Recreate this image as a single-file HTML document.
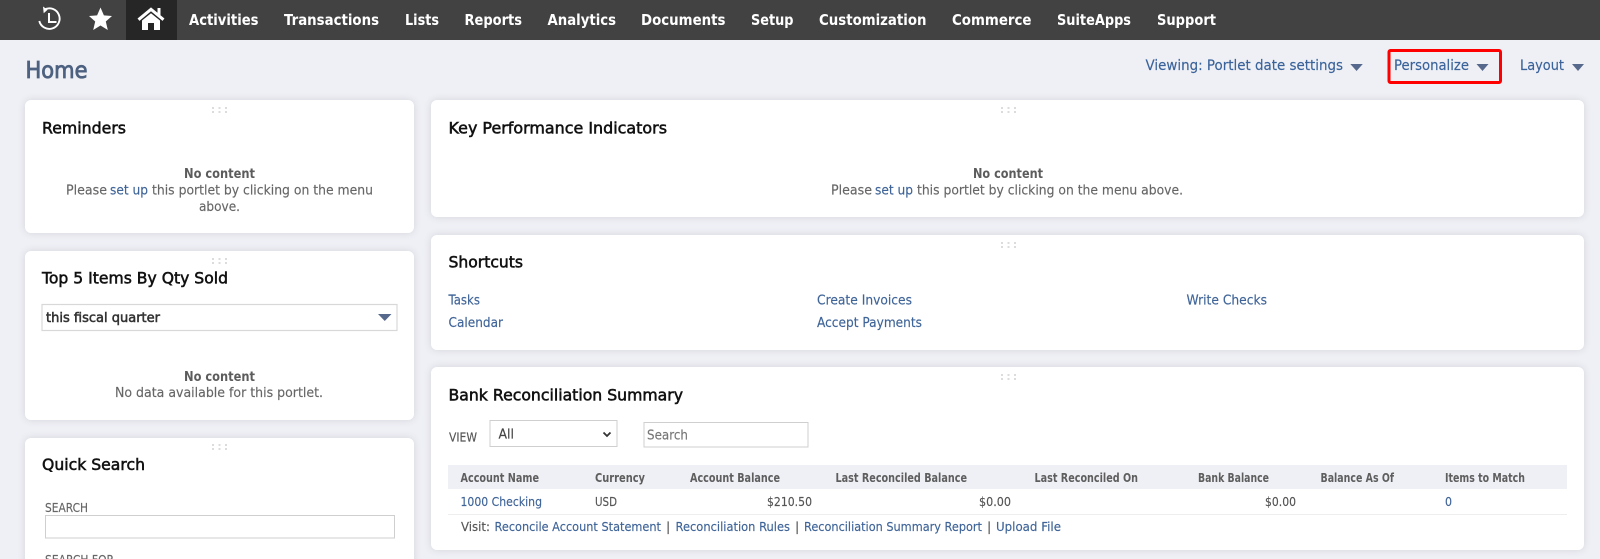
<!DOCTYPE html>
<html lang="en"><head><meta charset="utf-8"><title>Home</title>
<style>
html,body{margin:0;padding:0;width:1600px;height:559px;overflow:hidden;background:#eff0f5}
#w{position:relative;width:1600px;height:559px;overflow:hidden}
svg{position:absolute;left:0;top:0;display:block}
.card{position:absolute;background:#fff;border-radius:6px;box-shadow:0 0 8px rgba(60,70,90,.15)}
text{font-family:"DejaVu Sans","Liberation Sans",sans-serif;font-size:13px;fill:#666;stroke:#666;stroke-width:.15px}
.nav{font-weight:700;font-size:15px;fill:#fff;stroke:none}
.t{font-size:16px;fill:#111;stroke:#111;stroke-width:.55px}
.b{font-weight:700;fill:#5c5c5c;stroke:none}
.a{fill:#3f6498;stroke:#3f6498}
.h{font-size:12px;font-weight:700;fill:#5e5e5e;stroke:none}
.d{font-size:12.5px;fill:#555;stroke:#555}
.l{font-size:12.5px;fill:#3f6498;stroke:#3f6498}
.top{font-size:14px;fill:#3a639b;stroke:#3a639b}
.lab{font-size:12px;fill:#666}
</style></head><body>
<div id="w">
<div class="card" style="left:25px;top:100px;width:389px;height:133px"></div>
<div class="card" style="left:25px;top:251px;width:389px;height:169px"></div>
<div class="card" style="left:25px;top:437.500px;width:389px;height:140px"></div>
<div class="card" style="left:431px;top:100px;width:1153px;height:117px"></div>
<div class="card" style="left:431px;top:235px;width:1153px;height:115px"></div>
<div class="card" style="left:431px;top:367px;width:1153px;height:183px"></div>
<svg width="1600" height="559" viewBox="0 0 1600 559" xmlns="http://www.w3.org/2000/svg">
<rect width="1600" height="40" fill="#424242"/>
<rect x="126" width="51" height="40" fill="#262626"/>
<!-- recent -->
<path d="M44.500 9.500A10.300 10.300 0 1 1 39.300 21" fill="none" stroke="#fff" stroke-width="1.900"/>
<path d="M43 6.500l4.600 3.200-3.900 3.600z" fill="#fff"/>
<path d="M49 13v9h7.500" fill="none" stroke="#fff" stroke-width="2"/>
<!-- star -->
<path d="M100.500 7.500l3.400 7.900 8.100.6-6.200 5.500 2 8.500-7.300-4.500-7.300 4.500 2-8.500L89 16l8.100-.6z" fill="#fff"/>
<!-- home -->
<path d="M138.500 19.700L151 9.300l12.500 10.400" fill="none" stroke="#fff" stroke-width="3"/>
<path d="M157.500 8h3v7h-3z" fill="#fff"/>
<path d="M142 20.500L151 13.200l9 7.300V30h-6v-7h-6v7h-6z" fill="#fff"/>
<rect x="148" y="23" width="6" height="4" fill="#262626"/>

<text class="nav" x="189" y="25" textLength="69.500" lengthAdjust="spacingAndGlyphs">Activities</text>
<text class="nav" x="284" y="25" textLength="95" lengthAdjust="spacingAndGlyphs">Transactions</text>
<text class="nav" x="405" y="25" textLength="34" lengthAdjust="spacingAndGlyphs">Lists</text>
<text class="nav" x="464.500" y="25" textLength="57.500" lengthAdjust="spacingAndGlyphs">Reports</text>
<text class="nav" x="547.500" y="25" textLength="68.500" lengthAdjust="spacingAndGlyphs">Analytics</text>
<text class="nav" x="641" y="25" textLength="84.500" lengthAdjust="spacingAndGlyphs">Documents</text>
<text class="nav" x="751" y="25" textLength="42.500" lengthAdjust="spacingAndGlyphs">Setup</text>
<text class="nav" x="819" y="25" textLength="107.500" lengthAdjust="spacingAndGlyphs">Customization</text>
<text class="nav" x="952" y="25" textLength="79.500" lengthAdjust="spacingAndGlyphs">Commerce</text>
<text class="nav" x="1057" y="25" textLength="74" lengthAdjust="spacingAndGlyphs">SuiteApps</text>
<text class="nav" x="1157" y="25" textLength="59" lengthAdjust="spacingAndGlyphs">Support</text>

<text x="25.500" y="78" textLength="62" lengthAdjust="spacingAndGlyphs" style="font-size:23px;fill:#4d6180;stroke:#4d6180;stroke-width:.85px">Home</text>

<text class="top" x="1145.500" y="70" textLength="197.500" lengthAdjust="spacingAndGlyphs">Viewing: Portlet date settings</text>
<path d="M1350.300 64h12.500l-6.250 7z" fill="#56688c"/>
<text class="top" x="1394" y="70" textLength="75" lengthAdjust="spacingAndGlyphs">Personalize</text>
<path d="M1476.500 64h12l-6 7z" fill="#56688c"/>
<text class="top" x="1520" y="70" textLength="44" lengthAdjust="spacingAndGlyphs">Layout</text>
<path d="M1572 64h12l-6 7z" fill="#56688c"/>
<rect x="1389" y="50.500" width="111.500" height="32" rx="1.500" fill="none" stroke="#f00" stroke-width="3"/>

<!-- drag handles -->
<g fill="#dcdcdc">
<path d="M212 107h2v2h-2zM218.500 107h2v2h-2zM225 107h2v2h-2zM212 111h2v2h-2zM218.500 111h2v2h-2zM225 111h2v2h-2z"/>
<path d="M212 258h2v2h-2zM218.500 258h2v2h-2zM225 258h2v2h-2zM212 262h2v2h-2zM218.500 262h2v2h-2zM225 262h2v2h-2z"/>
<path d="M212 444h2v2h-2zM218.500 444h2v2h-2zM225 444h2v2h-2zM212 448h2v2h-2zM218.500 448h2v2h-2zM225 448h2v2h-2z"/>
<path d="M1001 107h2v2h-2zM1007.500 107h2v2h-2zM1014 107h2v2h-2zM1001 111h2v2h-2zM1007.500 111h2v2h-2zM1014 111h2v2h-2z"/>
<path d="M1001 242h2v2h-2zM1007.500 242h2v2h-2zM1014 242h2v2h-2zM1001 246h2v2h-2zM1007.500 246h2v2h-2zM1014 246h2v2h-2z"/>
<path d="M1001 374h2v2h-2zM1007.500 374h2v2h-2zM1014 374h2v2h-2zM1001 378h2v2h-2zM1007.500 378h2v2h-2zM1014 378h2v2h-2z"/>
</g>

<!-- Reminders -->
<text class="t" x="42" y="133.700" textLength="84" lengthAdjust="spacingAndGlyphs">Reminders</text>
<text class="b" x="184" y="178.200" textLength="71" lengthAdjust="spacingAndGlyphs">No content</text>
<text x="66" y="194.300" textLength="41" lengthAdjust="spacingAndGlyphs">Please</text>
<text class="a" x="110" y="194.300" textLength="38" lengthAdjust="spacingAndGlyphs">set up</text>
<text x="152" y="194.300" textLength="221" lengthAdjust="spacingAndGlyphs">this portlet by clicking on the menu</text>
<text x="199" y="211" textLength="41" lengthAdjust="spacingAndGlyphs">above.</text>

<!-- Top 5 -->
<text class="t" x="42" y="283.700" textLength="186" lengthAdjust="spacingAndGlyphs">Top 5 Items By Qty Sold</text>
<rect x="42" y="304.500" width="355" height="26" fill="#fff" stroke="#d8d8d8" stroke-width="1.200"/>
<text x="46" y="322" textLength="114" lengthAdjust="spacingAndGlyphs" style="fill:#333;stroke:#333;stroke-width:.55px">this fiscal quarter</text>
<path d="M378 314h13.500l-6.750 7z" fill="#56688c"/>
<text class="b" x="184" y="381" textLength="71" lengthAdjust="spacingAndGlyphs">No content</text>
<text x="115" y="397" textLength="208" lengthAdjust="spacingAndGlyphs">No data available for this portlet.</text>

<!-- Quick Search -->
<text class="t" x="42" y="470" textLength="103" lengthAdjust="spacingAndGlyphs">Quick Search</text>
<text class="lab" x="45" y="512" textLength="43" lengthAdjust="spacingAndGlyphs">SEARCH</text>
<rect x="45.500" y="515.500" width="349" height="22.500" fill="#fff" stroke="#cfcfcf"/>
<text class="lab" x="45" y="564" textLength="69" lengthAdjust="spacingAndGlyphs">SEARCH FOR</text>

<!-- KPI -->
<text class="t" x="448.500" y="133.700" textLength="218.500" lengthAdjust="spacingAndGlyphs">Key Performance Indicators</text>
<text class="b" x="973" y="178.200" textLength="70" lengthAdjust="spacingAndGlyphs">No content</text>
<text x="831" y="194.300" textLength="41" lengthAdjust="spacingAndGlyphs">Please</text>
<text class="a" x="875" y="194.300" textLength="38" lengthAdjust="spacingAndGlyphs">set up</text>
<text x="917" y="194.300" textLength="266" lengthAdjust="spacingAndGlyphs">this portlet by clicking on the menu above.</text>

<!-- Shortcuts -->
<text class="t" x="448.500" y="267.700" textLength="74.500" lengthAdjust="spacingAndGlyphs">Shortcuts</text>
<text class="a" x="448.500" y="304.300" textLength="31.500" lengthAdjust="spacingAndGlyphs">Tasks</text>
<text class="a" x="448.500" y="327" textLength="54.500" lengthAdjust="spacingAndGlyphs">Calendar</text>
<text class="a" x="817" y="304.300" textLength="95" lengthAdjust="spacingAndGlyphs">Create Invoices</text>
<text class="a" x="817" y="327" textLength="105" lengthAdjust="spacingAndGlyphs">Accept Payments</text>
<text class="a" x="1186.500" y="304.300" textLength="80.500" lengthAdjust="spacingAndGlyphs">Write Checks</text>

<!-- Bank -->
<text class="t" x="448.500" y="400.500" textLength="234.500" lengthAdjust="spacingAndGlyphs">Bank Reconciliation Summary</text>
<text x="449" y="441.500" textLength="28" lengthAdjust="spacingAndGlyphs" style="font-size:12px;fill:#555;stroke:#555">VIEW</text>
<rect x="490" y="420.500" width="127" height="26" fill="#fff" stroke="#cfcfcf"/>
<text x="498.500" y="438.400" textLength="15.500" lengthAdjust="spacingAndGlyphs" style="fill:#444;stroke:#444">All</text>
<path d="M603.500 432.500l3.500 3.500 3.500-3.500" fill="none" stroke="#333" stroke-width="1.800"/>
<rect x="644" y="422.500" width="164" height="24.500" fill="#fff" stroke="#cfcfcf"/>
<text x="647" y="439.400" textLength="41" lengthAdjust="spacingAndGlyphs" style="fill:#777;stroke:#777">Search</text>

<rect x="448" y="465" width="1119" height="24" fill="#eff0f5"/>
<text class="h" x="460.500" y="482" textLength="78.500" lengthAdjust="spacingAndGlyphs">Account Name</text>
<text class="h" x="595" y="482" textLength="50" lengthAdjust="spacingAndGlyphs">Currency</text>
<text class="h" x="690" y="482" textLength="90" lengthAdjust="spacingAndGlyphs">Account Balance</text>
<text class="h" x="835.500" y="482" textLength="131.500" lengthAdjust="spacingAndGlyphs">Last Reconciled Balance</text>
<text class="h" x="1034.500" y="482" textLength="103.500" lengthAdjust="spacingAndGlyphs">Last Reconciled On</text>
<text class="h" x="1198" y="482" textLength="71" lengthAdjust="spacingAndGlyphs">Bank Balance</text>
<text class="h" x="1320.500" y="482" textLength="73.500" lengthAdjust="spacingAndGlyphs">Balance As Of</text>
<text class="h" x="1445" y="482" textLength="80" lengthAdjust="spacingAndGlyphs">Items to Match</text>

<text class="l" x="460.500" y="506" textLength="81.500" lengthAdjust="spacingAndGlyphs">1000 Checking</text>
<text class="d" x="595" y="506" textLength="22" lengthAdjust="spacingAndGlyphs">USD</text>
<text class="d" x="767" y="506" textLength="45" lengthAdjust="spacingAndGlyphs">$210.50</text>
<text class="d" x="979" y="506" textLength="32" lengthAdjust="spacingAndGlyphs">$0.00</text>
<text class="d" x="1265" y="506" textLength="31" lengthAdjust="spacingAndGlyphs">$0.00</text>
<text class="l" x="1445" y="506" textLength="7" lengthAdjust="spacingAndGlyphs">0</text>
<rect x="448" y="514" width="1119" height="1" fill="#eeeeee"/>

<text class="d" x="461" y="531" textLength="29" lengthAdjust="spacingAndGlyphs">Visit:</text>
<text class="l" x="494.500" y="531" textLength="166.500" lengthAdjust="spacingAndGlyphs">Reconcile Account Statement</text>
<text class="d" x="666" y="531">|</text>
<text class="l" x="675.500" y="531" textLength="114.500" lengthAdjust="spacingAndGlyphs">Reconciliation Rules</text>
<text class="d" x="795" y="531">|</text>
<text class="l" x="804" y="531" textLength="178" lengthAdjust="spacingAndGlyphs">Reconciliation Summary Report</text>
<text class="d" x="987" y="531">|</text>
<text class="l" x="996" y="531" textLength="65" lengthAdjust="spacingAndGlyphs">Upload File</text>
</svg>
</div>
</body></html>
